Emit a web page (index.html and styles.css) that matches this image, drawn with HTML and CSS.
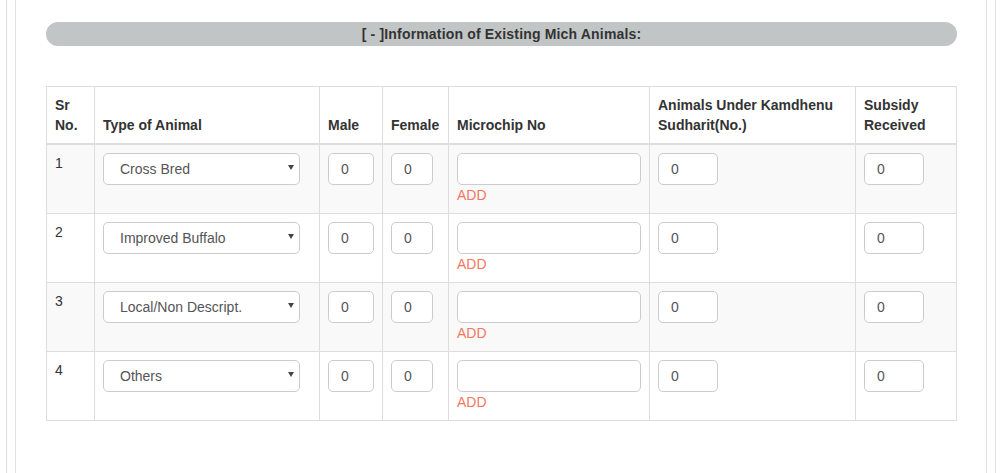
FILE: index.html
```html
<!DOCTYPE html>
<html>
<head>
<meta charset="utf-8">
<link rel="stylesheet" href="styles.css">
</head>
<body>
<div class="page">
  <div class="panel">
    <div class="titlebar">[ - ]Information of Existing Mich Animals:</div>
    <table class="grid">
      <colgroup>
        <col class="c-sr"><col class="c-type"><col class="c-male"><col class="c-female"><col class="c-chip"><col class="c-kam"><col class="c-sub">
      </colgroup>
      <thead>
        <tr>
          <th>Sr No.</th>
          <th>Type of Animal</th>
          <th>Male</th>
          <th>Female</th>
          <th>Microchip No</th>
          <th>Animals Under Kamdhenu Sudharit(No.)</th>
          <th>Subsidy Received</th>
        </tr>
      </thead>
      <tbody>
        <tr class="striped">
          <td>1</td>
          <td><span class="sel"><select class="ctl select"><option>Cross Bred</option></select></span></td>
          <td><input class="ctl male" value="0"></td>
          <td><input class="ctl female" value="0"></td>
          <td><input class="ctl chip" value=""><div class="add">ADD</div></td>
          <td><input class="ctl small" value="0"></td>
          <td><input class="ctl small" value="0"></td>
        </tr>
        <tr>
          <td>2</td>
          <td><span class="sel"><select class="ctl select"><option>Improved Buffalo</option></select></span></td>
          <td><input class="ctl male" value="0"></td>
          <td><input class="ctl female" value="0"></td>
          <td><input class="ctl chip" value=""><div class="add">ADD</div></td>
          <td><input class="ctl small" value="0"></td>
          <td><input class="ctl small" value="0"></td>
        </tr>
        <tr class="striped">
          <td>3</td>
          <td><span class="sel"><select class="ctl select"><option>Local/Non Descript.</option></select></span></td>
          <td><input class="ctl male" value="0"></td>
          <td><input class="ctl female" value="0"></td>
          <td><input class="ctl chip" value=""><div class="add">ADD</div></td>
          <td><input class="ctl small" value="0"></td>
          <td><input class="ctl small" value="0"></td>
        </tr>
        <tr>
          <td>4</td>
          <td><span class="sel"><select class="ctl select"><option>Others</option></select></span></td>
          <td><input class="ctl male" value="0"></td>
          <td><input class="ctl female" value="0"></td>
          <td><input class="ctl chip" value=""><div class="add">ADD</div></td>
          <td><input class="ctl small" value="0"></td>
          <td><input class="ctl small" value="0"></td>
        </tr>
      </tbody>
    </table>
  </div>
</div>
</body>
</html>
```

FILE: styles.css
```css
html, body {
  margin: 0;
  padding: 0;
  background: #fff;
  height: 100%;
  overflow: hidden;
}
body {
  font-family: "Liberation Sans", Arial, sans-serif;
  font-size: 14px;
  line-height: 20px;
  color: #333;
}
.page {
  margin-left: 6px;
  width: 972px;
  height: 473px;
  border-left: 1px solid #dcdcdc;
  border-right: 1px solid #e2e2ea;
  padding: 0 8px;
}
.panel {
  height: 473px;
  border-left: 1px solid #e3e3e3;
  border-right: 1px solid #e2e2ea;
  padding: 22px 29px 0 30px;
  box-sizing: border-box;
}
.titlebar {
  height: 24px;
  line-height: 24px;
  background: #c2c5c5;
  border-radius: 12px;
  text-align: center;
  font-weight: bold;
  font-size: 14px;
  letter-spacing: 0.17px;
  color: #333;
}
.grid {
  margin-top: 40px;
  width: 910px;
  border-collapse: collapse;
  table-layout: fixed;
}
.c-sr { width: 48px; }
.c-type { width: 225px; }
.c-male { width: 63px; }
.c-female { width: 66px; }
.c-chip { width: 201px; }
.c-kam { width: 206px; }
.c-sub { width: 101px; }
.grid th, .grid td {
  border: 1px solid #ddd;
  padding: 8px;
  text-align: left;
}
.grid th {
  vertical-align: bottom;
  font-weight: bold;
  border-bottom-width: 2px;
}
.grid td {
  vertical-align: top;
}
.grid tr.striped td {
  background: #f9f9f9;
}
.ctl {
  display: block;
  box-sizing: border-box;
  height: 32px;
  margin: 0;
  border: 1px solid #ccc;
  border-radius: 5px;
  background: #fff;
  font-family: "Liberation Sans", Arial, sans-serif;
  font-size: 14px;
  color: #555;
  padding: 0 12px;
  outline: none;
}
.sel {
  display: block;
  position: relative;
  width: 197px;
}
.sel::after {
  content: "";
  position: absolute;
  left: 185px;
  top: 12px;
  border-left: 3px solid transparent;
  border-right: 3px solid transparent;
  border-top: 5px solid #444;
}
.select {
  width: 197px;
  -webkit-appearance: none;
  appearance: none;
  padding-left: 16px;
}
.male { width: 46px; }
.female { width: 42px; }
.chip { width: 184px; }
.small { width: 60px; }
.add {
  color: #f5775f;
  line-height: 20px;
}
```
